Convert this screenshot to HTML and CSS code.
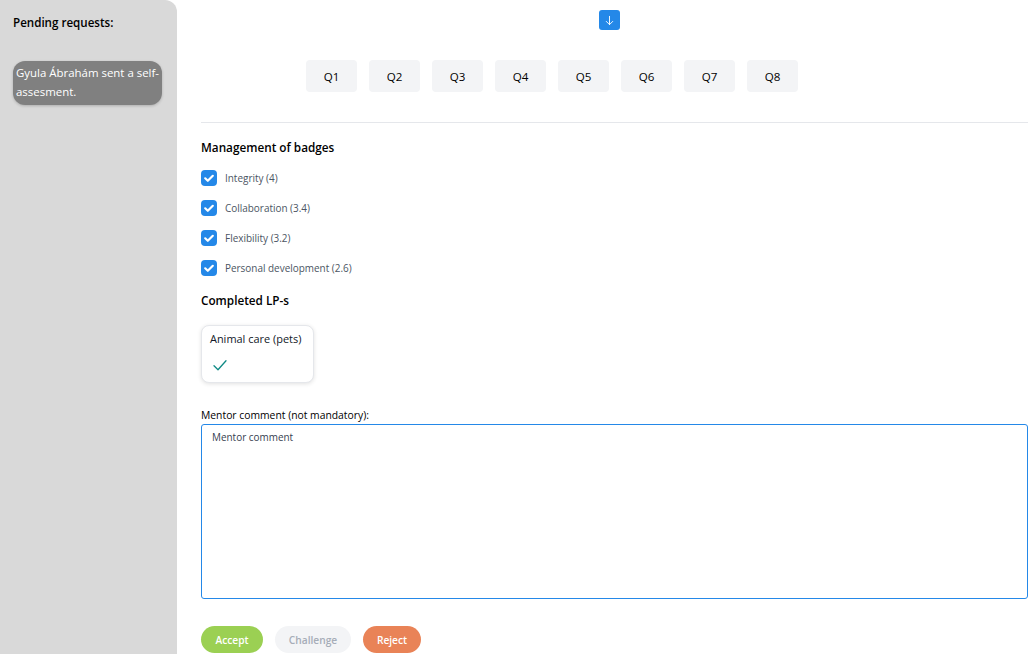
FILE: index.html
```html
<!DOCTYPE html>
<html lang="en">
<head>
<meta charset="utf-8">
<title>Mentor review</title>
<link rel="stylesheet" href="styles.css">
</head>
<body>
<div class="app">
  <aside class="sidebar">
    <h2 class="side-title">Pending requests:</h2>
    <div class="request">Gyula Ábrahám sent a self-assesment.</div>
  </aside>
  <main class="main">
    <div class="top">
      <button class="down" type="button" aria-label="Down">
        <svg viewBox="0 0 24 24" width="11" height="11" fill="none" stroke="#fff" stroke-width="2" stroke-linecap="round" stroke-linejoin="round"><path d="M12 3v18M5 14l7 7 7-7"/></svg>
      </button>
    </div>
    <div class="questions">
      <button class="q" type="button">Q1</button>
      <button class="q" type="button">Q2</button>
      <button class="q" type="button">Q3</button>
      <button class="q" type="button">Q4</button>
      <button class="q" type="button">Q5</button>
      <button class="q" type="button">Q6</button>
      <button class="q" type="button">Q7</button>
      <button class="q" type="button">Q8</button>
    </div>
    <hr class="rule">
    <h3 class="heading">Management of badges</h3>
    <ul class="badges">
      <li class="badge"><span class="box"><svg viewBox="0 0 16 16" width="16" height="16" fill="none" stroke="#fff" stroke-width="2.2" stroke-linecap="round" stroke-linejoin="round"><path d="M4.2 8.3l2.6 2.5 5-5"/></svg></span>Integrity (4)</li>
      <li class="badge"><span class="box"><svg viewBox="0 0 16 16" width="16" height="16" fill="none" stroke="#fff" stroke-width="2.2" stroke-linecap="round" stroke-linejoin="round"><path d="M4.2 8.3l2.6 2.5 5-5"/></svg></span>Collaboration (3.4)</li>
      <li class="badge"><span class="box"><svg viewBox="0 0 16 16" width="16" height="16" fill="none" stroke="#fff" stroke-width="2.2" stroke-linecap="round" stroke-linejoin="round"><path d="M4.2 8.3l2.6 2.5 5-5"/></svg></span>Flexibility (3.2)</li>
      <li class="badge"><span class="box"><svg viewBox="0 0 16 16" width="16" height="16" fill="none" stroke="#fff" stroke-width="2.2" stroke-linecap="round" stroke-linejoin="round"><path d="M4.2 8.3l2.6 2.5 5-5"/></svg></span>Personal development (2.6)</li>
    </ul>
    <h3 class="heading lp-heading">Completed LP-s</h3>
    <div class="card">
      <div class="card-title">Animal care (pets)</div>
      <svg class="card-check" viewBox="0 0 16 16" width="16" height="16" fill="none" stroke="#0f8a85" stroke-width="1.3" stroke-linecap="round" stroke-linejoin="round"><path d="M2 8.8l4 4L14 3.8"/></svg>
    </div>
    <label class="comment-label" for="comment">Mentor comment (not mandatory):</label>
    <textarea class="comment" id="comment">Mentor comment</textarea>
    <div class="actions">
      <button class="pill accept" type="button">Accept</button>
      <button class="pill challenge" type="button">Challenge</button>
      <button class="pill reject" type="button">Reject</button>
    </div>
  </main>
</div>
</body>
</html>
```
FILE: styles.css
```css
* { box-sizing: border-box; }
html, body { margin: 0; height: 100%; overflow: hidden; background: #fff; }
body { font-family: "Open Sans", "Noto Sans", sans-serif; font-size: 11.2px; color: #111827; }
.app { display: flex; height: 654px; }
.sidebar { width: 177px; flex: none; background: #d9d9d9; border-radius: 0 12px 0 0; padding: 14px 13px 0 13px; }
.side-title { margin: 0; font-size: 11.6px; line-height: 17px; font-weight: 600; color: #000; }
.request { margin-top: 30px; width: 149px; height: 44px; padding: 2px 0 2px 3px; background: #808080; color: #fff; border-radius: 12px; font-size: 11.45px; line-height: 19px; box-shadow: 0 1px 3px rgba(0,0,0,.2); }
.main { flex: 1; padding: 0 3px 0 24px; min-width: 0; }
.top { display: flex; justify-content: center; padding: 10px 10px 0 0; }
.down { width: 21px; height: 20px; padding: 0; border: 0; border-radius: 3px; background: #2488e8; display: flex; align-items: center; justify-content: center; }
.questions { display: flex; gap: 12px; margin-top: 30px; padding-left: 105px; }
.q { width: 51px; height: 32px; padding: 0; border: 0; border-radius: 4px; background: #f3f4f6; color: #000; font: 500 11.6px "Open Sans", sans-serif; }
.rule { margin: 30px 0 0; border: 0; border-top: 1px solid #e5e7eb; }
.heading { margin: 0; font-size: 11.75px; line-height: 17px; font-weight: 600; color: #000; }
.rule + .heading { margin-top: 16px; }
.badges { list-style: none; margin: 14px 0 0; padding: 0; display: flex; flex-direction: column; gap: 14px; }
.badge { display: flex; align-items: center; height: 16px; color: #4b5563; font-size: 9.95px; }
.box { width: 16px; height: 16px; margin-right: 8px; border-radius: 4px; background: #2488e8; display: block; }
.box svg { display: block; }
.lp-heading { margin-top: 16px; }
.card { margin-top: 16px; width: 113px; height: 58px; padding: 5px 8px; border: 1px solid #e5e7eb; border-radius: 8px; background: #fff; box-shadow: 0 1px 4px rgba(0,0,0,.12); }
.card-title { font-size: 10.95px; line-height: 15px; color: #111827; white-space: nowrap; }
.card-check { display: block; margin: 11px 0 0 2px; }
.comment-label { display: block; margin-top: 25px; font-size: 10.35px; line-height: 15px; color: #000; }
.comment { display: block; width: 100%; height: 175px; margin-top: 1px; padding: 5px 10px; border: 1px solid #2488e8; border-radius: 3px; outline: 0; resize: none; font: 9.95px/14px "Open Sans", sans-serif; color: #374151; }
.actions { display: flex; gap: 12px; margin-top: 27px; }
.pill { height: 27px; padding: 0; border: 0; border-radius: 14px; font: 600 10.2px "Open Sans", sans-serif; color: #fff; }
.accept { width: 62px; background: #9bd053; }
.challenge { width: 76px; background: #f3f4f6; color: #a6adb8; }
.reject { width: 58px; background: #e98357; }
```
